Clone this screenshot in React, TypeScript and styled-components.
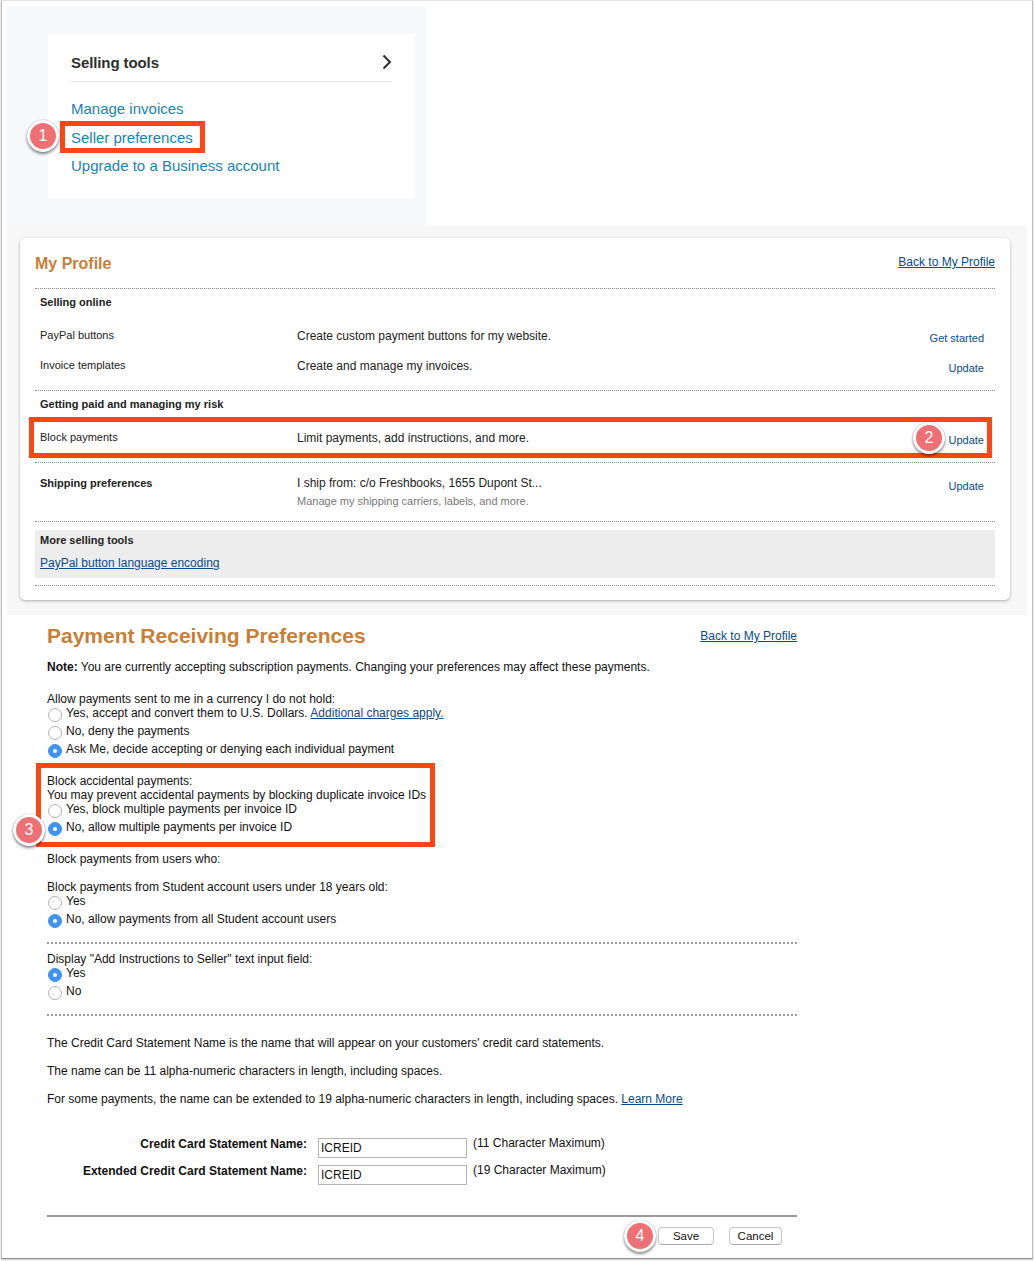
import React from "react";
import styled, { createGlobalStyle } from "styled-components";

const Global = createGlobalStyle`
  html, body { margin: 0; padding: 0; background: #fff; }
  body { font-family: "Liberation Sans", Arial, sans-serif; color: #222; font-size: 12px; }
`;

const Page = styled.div`
  position: relative;
  width: 1034px;
  height: 1261px;
  overflow: hidden;
`;

const Frame = styled.div`
  box-sizing: border-box;
  width: 1032px;
  height: 1259px;
  margin-left: 1px;
  padding: 5px 0 0 5px;
  background: #fff;
  border-top: 1px solid #e4e4e4;
  border-left: 1px solid #bdbdbd;
  border-right: 1px solid #bdbdbd;
  border-bottom: 1px solid #8e8e8e;
  box-shadow: 0 1px 2px rgba(0, 0, 0, 0.25);
`;

const TopPanel = styled.section`
  box-sizing: border-box;
  width: 419px;
  height: 220px;
  padding: 28px 11px 27px 41px;
  background: #f7f8fa;
`;

const ToolsCard = styled.div`
  box-sizing: border-box;
  height: 165px;
  padding: 16px 23px 0;
  background: #fff;
`;

const ToolsHead = styled.div`
  box-sizing: border-box;
  display: flex;
  align-items: center;
  justify-content: space-between;
  height: 32px;
  padding-bottom: 7px;
  border-bottom: 1px solid #e1e3e5;
  font-size: 15px;
  font-weight: 700;
  letter-spacing: -0.1px;
  color: #2c2e2f;
  svg { display: block; }
`;

const ToolsLinks = styled.nav`
  display: flex;
  flex-direction: column;
  padding-top: 17px;
`;

const ToolLink = styled.a`
  height: 28.5px;
  line-height: 20px;
  font-size: 15px;
  color: #1b82b0;
`;

const ProfileSection = styled.section`
  box-sizing: border-box;
  width: 1020px;
  height: 389px;
  padding: 12px 17px 15px 13px;
  background: #f7f7f7;
`;

const ProfileCard = styled.div`
  box-sizing: border-box;
  height: 362px;
  padding: 0 15px;
  background: #fff;
  border-radius: 5px;
  box-shadow: 0 1px 3px rgba(0, 0, 0, 0.3);
`;

const ProfileHead = styled.header`
  display: flex;
  align-items: center;
  justify-content: space-between;
  height: 50px;
`;

const ProfileTitle = styled.h2`
  margin: 2px 0 0;
  font-size: 16px;
  font-weight: 700;
  color: #c77f38;
`;

const PlainLink = styled.a<{ $lift?: number }>`
  margin-bottom: ${(p) => p.$lift ?? 0}px;
  font-size: 12px;
  color: #084b8a;
  text-decoration: underline;
`;

const Dots = styled.div`
  height: 0;
  border-top: 1px dotted #8f8f8f;
`;

const Row = styled.div<{ $h: number; $top?: number }>`
  box-sizing: border-box;
  display: grid;
  grid-template-columns: 257px 1fr auto;
  height: ${(p) => p.$h}px;
  padding: ${(p) => p.$top ?? 0}px 11px 0 5px;
`;

const RowLabel = styled.div<{ $bold?: boolean }>`
  margin-top: ${(p) => (p.$bold ? 0 : -1)}px;
  font-size: 11px;
  line-height: 14px;
  font-weight: ${(p) => (p.$bold ? 700 : 400)};
  color: #222;
`;

const RowText = styled.div`
  font-size: 12px;
  line-height: 14px;
  color: #222;
`;

const RowSub = styled.div`
  margin-top: 4px;
  font-size: 11px;
  line-height: 14px;
  color: #777;
`;

const RowAction = styled.a<{ $drop: number }>`
  margin-top: ${(p) => p.$drop}px;
  font-size: 11px;
  line-height: 14px;
  color: #084b8a;
`;

const MoreBox = styled.div`
  box-sizing: border-box;
  height: 48px;
  margin: 8px 0 7px;
  padding: 3px 5px 0;
  background: #ededed;
`;

const MoreLink = styled(PlainLink)`
  display: block;
  margin-top: 9px;
  line-height: 14px;
`;

const Form = styled.section`
  width: 750px;
  margin-left: 40px;
`;

const FormHead = styled.header`
  display: flex;
  align-items: center;
  justify-content: space-between;
  height: 30px;
  margin-top: 6px;
`;

const FormTitle = styled.h1`
  margin: 0;
  font-size: 21px;
  font-weight: 700;
  color: #c77f38;
`;

const Line = styled.p<{ $top?: number }>`
  margin: ${(p) => p.$top ?? 0}px 0 0;
  font-size: 12px;
  line-height: 14px;
  color: #111;
`;

const RadioRow = styled.label`
  display: flex;
  gap: 4px;
  height: 18px;
  margin-left: 1px;
  font-size: 12px;
  line-height: 14px;
  color: #111;
`;

const Radio = styled.span<{ $on?: boolean }>`
  box-sizing: border-box;
  flex: none;
  display: flex;
  align-items: center;
  justify-content: center;
  width: 14px;
  height: 14px;
  margin-top: 2px;
  border-radius: 50%;
  background: ${(p) => (p.$on ? "#3f93f2" : "#fff")};
  border: 1px solid ${(p) => (p.$on ? "#3f93f2" : "#b3b3b3")};
  &::after {
    content: "";
    display: ${(p) => (p.$on ? "block" : "none")};
    width: 4px;
    height: 4px;
    border-radius: 50%;
    background: #fff;
  }
`;

const Dashes = styled.div<{ $top: number }>`
  margin-top: ${(p) => p.$top}px;
  border-top: 2px dotted #9a9a9a;
`;

const Fields = styled.div`
  display: grid;
  grid-template-columns: 271px 149px auto;
  grid-auto-rows: 20px;
  row-gap: 7px;
  margin-top: 32px;
`;

const FieldLabel = styled.label`
  padding-right: 11px;
  text-align: right;
  font-size: 12px;
  font-weight: 700;
  line-height: 12px;
  color: #111;
`;

const FieldInput = styled.input`
  box-sizing: border-box;
  width: 149px;
  height: 20px;
  padding: 0 2px;
  border: 1px solid #b5b5b5;
  border-radius: 0;
  outline: none;
  font-family: "Liberation Sans", Arial, sans-serif;
  font-size: 12px;
  color: #111;
`;

const FieldHint = styled.span`
  padding-left: 6px;
  font-size: 12px;
  line-height: 10px;
  color: #111;
`;

const FormRule = styled.div`
  margin-top: 30px;
  height: 2px;
  background: #999;
`;

const Actions = styled.div`
  display: flex;
  justify-content: flex-end;
  gap: 15px;
  margin-top: 10px;
  padding-right: 15px;
`;

const Button = styled.button<{ $w: number }>`
  box-sizing: border-box;
  width: ${(p) => p.$w}px;
  height: 18px;
  padding: 0;
  background: #fff;
  border: 1px solid #c6c6c6;
  border-bottom-color: #aaa;
  border-radius: 4px;
  font-family: "Liberation Sans", Arial, sans-serif;
  font-size: 11.5px;
  color: #111;
`;

const Callout = styled.div<{ $x: number; $y: number; $w: number; $h: number }>`
  box-sizing: border-box;
  position: absolute;
  left: ${(p) => p.$x}px;
  top: ${(p) => p.$y}px;
  width: ${(p) => p.$w}px;
  height: ${(p) => p.$h}px;
  border: 5px solid #ff4514;
`;

const Badge = styled.div<{ $x: number; $y: number }>`
  box-sizing: border-box;
  position: absolute;
  left: ${(p) => p.$x - 16}px;
  top: ${(p) => p.$y - 16}px;
  width: 32px;
  height: 32px;
  border: 3px solid #fff;
  border-radius: 50%;
  background: #ee7074;
  box-shadow: 0 2px 3px rgba(0, 0, 0, 0.45), 0 0 1px rgba(0, 0, 0, 0.4);
  color: #fff;
  font-size: 16px;
  line-height: 26px;
  text-align: center;
`;

export default function App() {
  return (
    <Page>
      <Global />
      <Frame>
        <TopPanel>
          <ToolsCard>
            <ToolsHead>
              Selling tools
              <svg width="10" height="16" viewBox="0 0 10 16" fill="none">
                <path d="M1.5 1.5L8 8L1.5 14.5" stroke="#2c2e2f" strokeWidth="2" />
              </svg>
            </ToolsHead>
            <ToolsLinks>
              <ToolLink>Manage invoices</ToolLink>
              <ToolLink>Seller preferences</ToolLink>
              <ToolLink>Upgrade to a Business account</ToolLink>
            </ToolsLinks>
          </ToolsCard>
        </TopPanel>

        <ProfileSection>
          <ProfileCard>
            <ProfileHead>
              <ProfileTitle>My Profile</ProfileTitle>
              <PlainLink $lift={2}>Back to My Profile</PlainLink>
            </ProfileHead>
            <Dots />
            <Row $h={30} $top={6}>
              <RowLabel $bold>Selling online</RowLabel>
            </Row>
            <Row $h={30} $top={10}>
              <RowLabel>PayPal buttons</RowLabel>
              <RowText>Create custom payment buttons for my website.</RowText>
              <RowAction $drop={2}>Get started</RowAction>
            </Row>
            <Row $h={41} $top={10}>
              <RowLabel>Invoice templates</RowLabel>
              <RowText>Create and manage my invoices.</RowText>
              <RowAction $drop={2}>Update</RowAction>
            </Row>
            <Dots />
            <Row $h={30} $top={6}>
              <RowLabel $bold>Getting paid and managing my risk</RowLabel>
            </Row>
            <Row $h={41} $top={10}>
              <RowLabel>Block payments</RowLabel>
              <RowText>Limit payments, add instructions, and more.</RowText>
              <RowAction $drop={2}>Update</RowAction>
            </Row>
            <Dots />
            <Row $h={58} $top={13}>
              <RowLabel $bold>Shipping preferences</RowLabel>
              <div>
                <RowText>I ship from: c/o Freshbooks, 1655 Dupont St...</RowText>
                <RowSub>Manage my shipping carriers, labels, and more.</RowSub>
              </div>
              <RowAction $drop={3}>Update</RowAction>
            </Row>
            <Dots />
            <MoreBox>
              <RowLabel $bold>More selling tools</RowLabel>
              <MoreLink>PayPal button language encoding</MoreLink>
            </MoreBox>
            <Dots />
          </ProfileCard>
        </ProfileSection>

        <Form>
          <FormHead>
            <FormTitle>Payment Receiving Preferences</FormTitle>
            <PlainLink>Back to My Profile</PlainLink>
          </FormHead>
          <Line $top={9}>
            <b>Note:</b> You are currently accepting subscription payments. Changing your preferences may affect these payments.
          </Line>

          <Line $top={18}>Allow payments sent to me in a currency I do not hold:</Line>
          <RadioRow>
            <Radio />
            <span>
              Yes, accept and convert them to U.S. Dollars. <PlainLink>Additional charges apply.</PlainLink>
            </span>
          </RadioRow>
          <RadioRow><Radio />No, deny the payments</RadioRow>
          <RadioRow><Radio $on />Ask Me, decide accepting or denying each individual payment</RadioRow>

          <Line $top={14}>Block accidental payments:</Line>
          <Line>You may prevent accidental payments by blocking duplicate invoice IDs</Line>
          <RadioRow><Radio />Yes, block multiple payments per invoice ID</RadioRow>
          <RadioRow><Radio $on />No, allow multiple payments per invoice ID</RadioRow>

          <Line $top={14}>Block payments from users who:</Line>
          <Line $top={14}>Block payments from Student account users under 18 years old:</Line>
          <RadioRow><Radio />Yes</RadioRow>
          <RadioRow><Radio $on />No, allow payments from all Student account users</RadioRow>

          <Dashes $top={12} />
          <Line $top={8}>Display "Add Instructions to Seller" text input field:</Line>
          <RadioRow><Radio $on />Yes</RadioRow>
          <RadioRow><Radio />No</RadioRow>
          <Dashes $top={12} />

          <Line $top={20}>The Credit Card Statement Name is the name that will appear on your customers' credit card statements.</Line>
          <Line $top={14}>The name can be 11 alpha-numeric characters in length, including spaces.</Line>
          <Line $top={14}>
            For some payments, the name can be extended to 19 alpha-numeric characters in length, including spaces. <PlainLink>Learn More</PlainLink>
          </Line>

          <Fields>
            <FieldLabel>Credit Card Statement Name:</FieldLabel>
            <FieldInput readOnly value="ICREID" />
            <FieldHint>(11 Character Maximum)</FieldHint>
            <FieldLabel>Extended Credit Card Statement Name:</FieldLabel>
            <FieldInput readOnly value="ICREID" />
            <FieldHint>(19 Character Maximum)</FieldHint>
          </Fields>

          <FormRule />
          <Actions>
            <Button $w={56}>Save</Button>
            <Button $w={53}>Cancel</Button>
          </Actions>
        </Form>
      </Frame>

      <Callout $x={60} $y={121} $w={145} $h={32} />
      <Callout $x={29} $y={417} $w={963} $h={41} />
      <Callout $x={36} $y={763} $w={399} $h={84} />
      <Badge $x={43} $y={136}>1</Badge>
      <Badge $x={929} $y={438}>2</Badge>
      <Badge $x={29} $y={830}>3</Badge>
      <Badge $x={640} $y={1236}>4</Badge>
    </Page>
  );
}
